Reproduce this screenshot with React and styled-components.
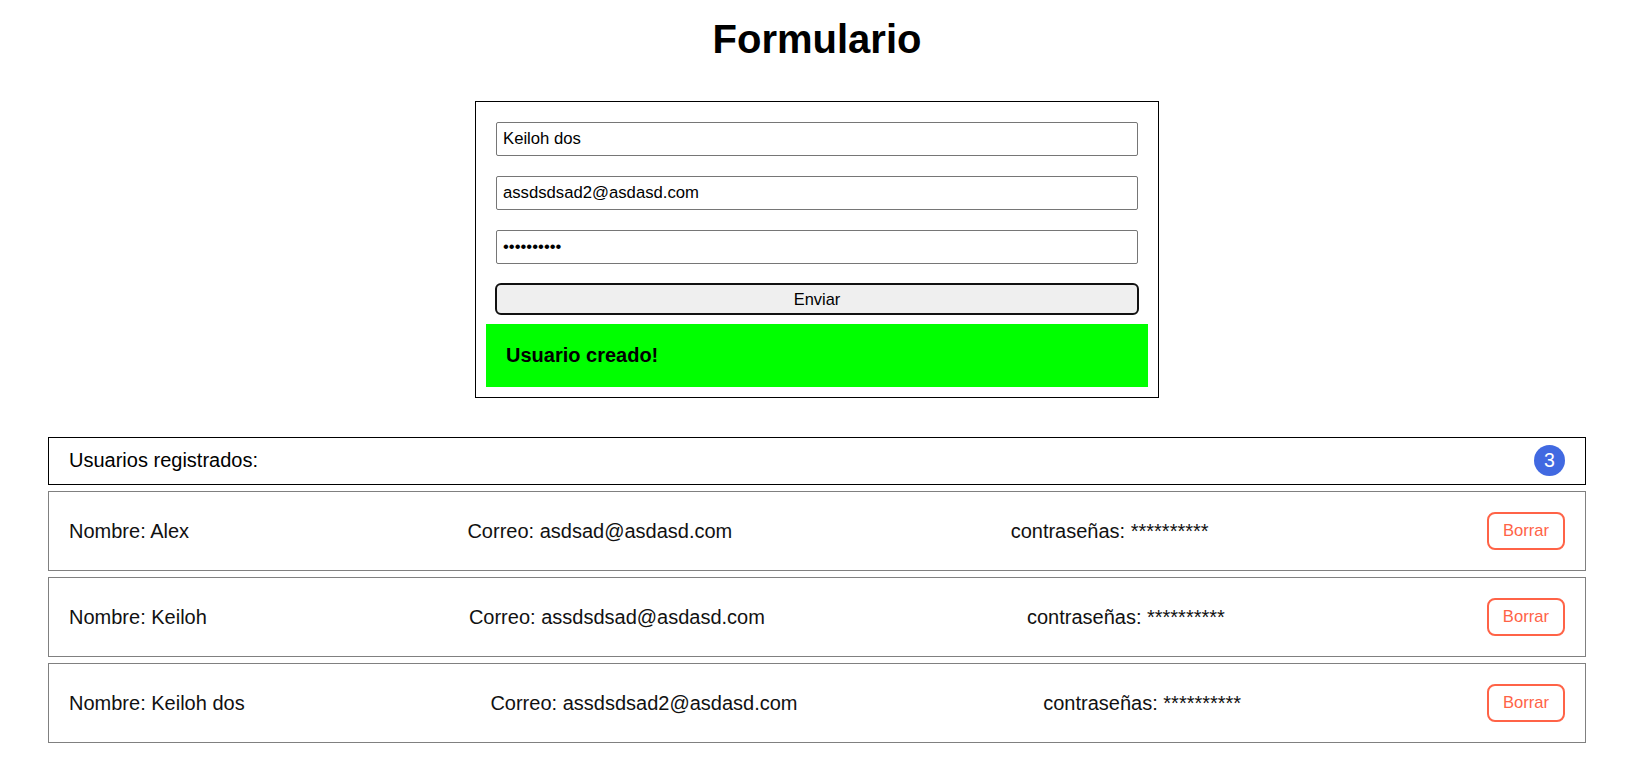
import React, { useState } from "react";
import styled, { createGlobalStyle } from "styled-components";

const GlobalStyle = createGlobalStyle`
  body {
    margin: 0;
    background: #fff;
    font-family: "Liberation Sans", Arial, sans-serif;
    color: #000;
  }
`;

const Page = styled.div`
  padding: 0 51px 40px 48px;
`;

const Title = styled.h1`
  margin: 17px 0 40px;
  font-size: 40px;
  line-height: 44px;
  font-weight: 700;
  text-align: center;
`;

const FormBox = styled.form`
  width: 684px;
  box-sizing: border-box;
  margin: 0 auto;
  border: 1px solid #000;
  padding: 10px;
`;

const Fields = styled.div`
  display: flex;
  flex-direction: column;
  gap: 20px;
  padding: 10px 10px 9px;
`;

const Input = styled.input`
  height: 34px;
  box-sizing: border-box;
  border: 1px solid #767676;
  border-radius: 2px;
  padding: 0 6px;
  font-family: "Liberation Sans", Arial, sans-serif;
  font-size: 16.7px;
  color: #000;
  outline: none;
`;

const SubmitButton = styled.button`
  height: 32px;
  margin: -1px -1px 0;
  box-sizing: border-box;
  background: #efefef;
  border: 2px solid #111;
  border-radius: 6px;
  font-family: "Liberation Sans", Arial, sans-serif;
  font-size: 16.4px;
  color: #000;
`;

const Alert = styled.div`
  background: #00ff00;
  padding: 20px 20px;
  font-size: 20px;
  line-height: 23px;
  font-weight: 700;
`;

const List = styled.div`
  margin-top: 39px;
  display: flex;
  flex-direction: column;
  gap: 6px;
`;

const ListHeader = styled.div`
  display: flex;
  align-items: center;
  justify-content: space-between;
  border: 1px solid #000;
  padding: 7px 20px 8px;
  font-size: 20px;
`;

const Badge = styled.span`
  width: 31px;
  height: 31px;
  border-radius: 50%;
  background: #4169e1;
  color: #fff;
  display: flex;
  align-items: center;
  justify-content: center;
  font-size: 19.5px;
`;

const UserRow = styled.div`
  display: flex;
  align-items: center;
  justify-content: space-between;
  border: 1px solid #808080;
  padding: 20px;
  font-size: 20px;
  color: #111;
`;

const DeleteButton = styled.button`
  height: 38px;
  padding: 0 14px;
  background: #fff;
  border: 2px solid #ff6347;
  border-radius: 8px;
  color: #ff6347;
  font-family: "Liberation Sans", Arial, sans-serif;
  font-size: 16.6px;
`;

const initialUsers = [
  { name: "Alex", email: "asdsad@asdasd.com" },
  { name: "Keiloh", email: "assdsdsad@asdasd.com" },
  { name: "Keiloh dos", email: "assdsdsad2@asdasd.com" },
];

export default function App() {
  const [users, setUsers] = useState(initialUsers);

  return (
    <Page>
      <GlobalStyle />
      <Title>Formulario</Title>
      <FormBox onSubmit={(e) => e.preventDefault()}>
        <Fields>
          <Input type="text" defaultValue="Keiloh dos" />
          <Input type="email" defaultValue="assdsdsad2@asdasd.com" />
          <Input type="password" defaultValue="1234567890" />
          <SubmitButton type="submit">Enviar</SubmitButton>
        </Fields>
        <Alert>Usuario creado!</Alert>
      </FormBox>

      <List>
        <ListHeader>
          <span>Usuarios registrados:</span>
          <Badge>{users.length}</Badge>
        </ListHeader>
        {users.map((u, i) => (
          <UserRow key={i}>
            <span>Nombre: {u.name}</span>
            <span>Correo: {u.email}</span>
            <span>contraseñas: **********</span>
            <DeleteButton onClick={() => setUsers(users.filter((_, j) => j !== i))}>
              Borrar
            </DeleteButton>
          </UserRow>
        ))}
      </List>
    </Page>
  );
}
